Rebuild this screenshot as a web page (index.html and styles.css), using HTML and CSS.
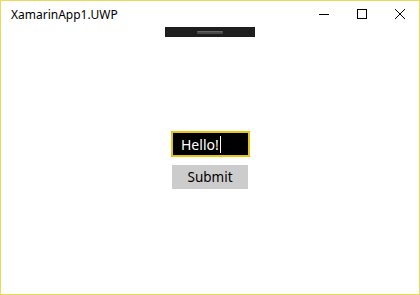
FILE: index.html
```html
<!DOCTYPE html>
<html>
<head>
<meta charset="utf-8">
<link rel="stylesheet" href="styles.css">
</head>
<body>
<div class="window">
  <div class="titlebar">
    <div class="title">XamarinApp1.UWP</div>
    <div class="controls">
      <div class="ctl"><svg width="12" height="12" viewBox="0 0 12 12"><path d="M1 6.5H11" stroke="#000" stroke-width="1"/></svg></div>
      <div class="ctl"><svg width="12" height="12" viewBox="0 0 12 12"><rect x="1.5" y="1.5" width="9" height="9" fill="none" stroke="#000" stroke-width="1"/></svg></div>
      <div class="ctl"><svg width="12" height="12" viewBox="0 0 12 12"><path d="M1 1L11 11M11 1L1 11" stroke="#000" stroke-width="1"/></svg></div>
    </div>
  </div>
  <div class="dragbar"><div class="grip"></div></div>
  <div class="content">
    <div class="textbox"><span class="text">Hello!</span><span class="caret"></span></div>
    <div class="button">Submit</div>
  </div>
</div>
</body>
</html>
```
FILE: styles.css
```css
html, body {
  margin: 0;
  padding: 0;
  background: #fff;
}
.window {
  width: 420px;
  height: 295px;
  box-sizing: border-box;
  border: 1px solid #ecd959;
  display: flex;
  flex-direction: column;
  font-family: "Noto Sans", "Open Sans", sans-serif;
  overflow: hidden;
}
.titlebar {
  height: 25px;
  display: flex;
  align-items: center;
  justify-content: space-between;
}
.title {
  font-size: 12px;
  color: #000;
  padding-left: 10px;
  margin-top: 1px;
}
.controls {
  display: flex;
  height: 25px;
}
.ctl {
  width: 38px;
  display: flex;
  align-items: center;
  justify-content: center;
}
.dragbar {
  align-self: center;
  width: 90px;
  height: 10px;
  margin-top: 1px;
  background: #1e1e1e;
  display: flex;
  align-items: center;
  justify-content: center;
}
.grip {
  width: 26px;
  height: 3px;
  background: #4a4a4a;
  border-radius: 1px;
  border-top: 1px solid #666;
  box-sizing: border-box;
}
.content {
  display: flex;
  flex-direction: column;
  align-items: center;
  padding-top: 94px;
  gap: 8px;
}
.textbox {
  width: 79px;
  height: 26px;
  box-sizing: border-box;
  border: 2px solid #e3c60f;
  background: #000;
  color: #fff;
  font-size: 14px;
  display: flex;
  align-items: center;
  padding-left: 8px;
  margin-left: 1px;
}
.caret {
  display: inline-block;
  width: 1px;
  height: 17px;
  background: #fff;
  margin-left: 1px;
}
.button {
  width: 76px;
  height: 24px;
  background: #cccccc;
  color: #000;
  font-size: 13.5px;
  display: flex;
  align-items: center;
  justify-content: center;
}
```
